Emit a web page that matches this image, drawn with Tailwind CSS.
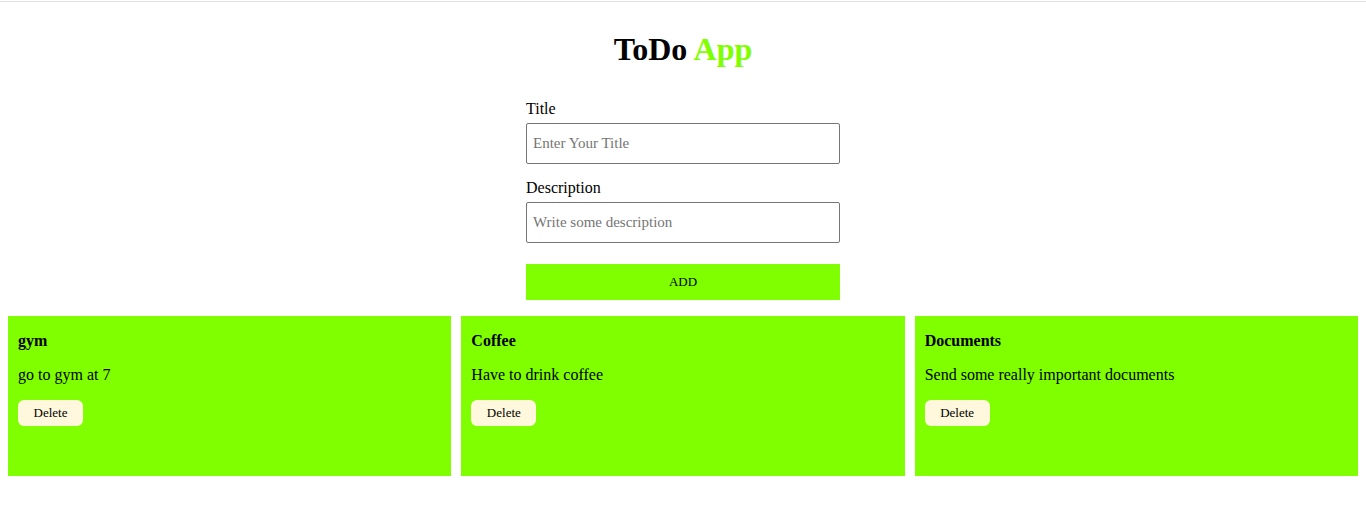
<!DOCTYPE html>
<html lang="en">
<head>
<meta charset="utf-8">
<title>ToDo App</title>
<script src="https://cdn.jsdelivr.net/npm/@tailwindcss/browser@4"></script>
</head>
<body class="bg-white text-black font-['Liberation_Serif','Times_New_Roman',serif] text-base">
<div class="h-px mt-px bg-[#e0e0e0]"></div>
<main class="px-2 pt-7">
  <h1 class="text-center text-[32px] leading-[39px] font-bold">ToDo <span class="text-[#7fff00]">App</span></h1>
  <form class="mx-auto mt-[30px] flex w-[314px] flex-col">
    <label for="title" class="leading-5">Title</label>
    <input id="title" type="text" placeholder="Enter Your Title" class="mt-1 h-[41px] rounded-xs border border-[#767676] bg-white px-1.5 text-[15px] placeholder:text-[#757575]">
    <label for="description" class="mt-3.5 leading-5">Description</label>
    <input id="description" type="text" placeholder="Write some description" class="mt-1 h-[41px] rounded-xs border border-[#767676] bg-white px-1.5 text-[15px] placeholder:text-[#757575]">
    <button type="button" class="mt-[21px] h-9 bg-[#7fff00] text-[13px]">ADD</button>
  </form>
  <section class="mt-4 grid grid-cols-3 gap-2.5">
    <article class="min-h-40 bg-[#7fff00] p-2.5">
      <h2 class="mt-1.5 leading-[18px] font-bold">gym</h2>
      <p class="mt-4 leading-[18px]">go to gym at 7</p>
      <button type="button" class="mt-4 h-[26px] min-w-[65px] rounded-md bg-[#fff8dc] px-3.5 text-[13px]">Delete</button>
    </article>
    <article class="min-h-40 bg-[#7fff00] p-2.5">
      <h2 class="mt-1.5 leading-[18px] font-bold">Coffee</h2>
      <p class="mt-4 leading-[18px]">Have to drink coffee</p>
      <button type="button" class="mt-4 h-[26px] min-w-[65px] rounded-md bg-[#fff8dc] px-3.5 text-[13px]">Delete</button>
    </article>
    <article class="min-h-40 bg-[#7fff00] p-2.5">
      <h2 class="mt-1.5 leading-[18px] font-bold">Documents</h2>
      <p class="mt-4 leading-[18px]">Send some really important documents</p>
      <button type="button" class="mt-4 h-[26px] min-w-[65px] rounded-md bg-[#fff8dc] px-3.5 text-[13px]">Delete</button>
    </article>
  </section>
</main>
</body>
</html>
